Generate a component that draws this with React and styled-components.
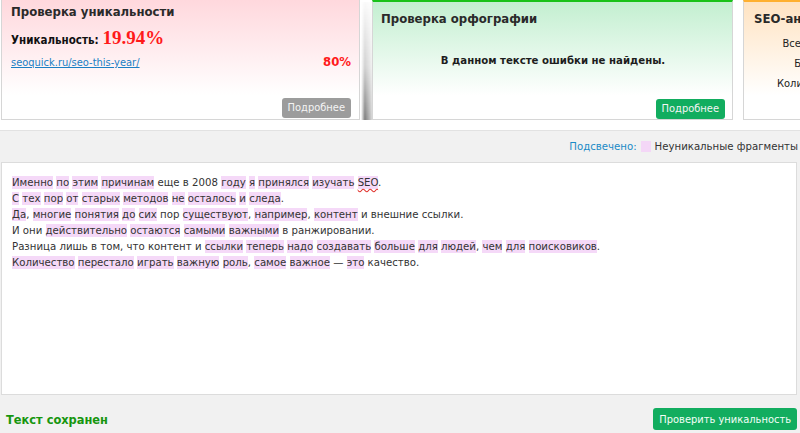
import React from 'react';
import styled, { createGlobalStyle } from 'styled-components';

const GlobalStyle = createGlobalStyle`
  html, body {
    margin: 0;
    padding: 0;
    background: #fff;
    overflow: hidden;
  }
  body {
    font-family: "DejaVu Sans Condensed", "DejaVu Sans", Verdana, sans-serif;
    font-stretch: condensed;
    color: #222;
  }
`;

const Page = styled.div`
  width: 800px;
  height: 433px;
  display: flex;
  flex-direction: column;
  overflow: hidden;
`;

const CardsRow = styled.div`
  display: flex;
  height: 120px;
  padding-left: 1px;
  margin-bottom: 10px;
`;

const Card = styled.div`
  position: relative;
  flex: 0 0 auto;
  width: ${(p) => p.width}px;
  margin-left: ${(p) => p.gap || 0}px;
  box-sizing: border-box;
  display: flex;
  flex-direction: column;
  border: 1px solid #d6d6d6;
  border-top: ${(p) => (p.accent ? `2px solid ${p.accent}` : 'none')};
  background: linear-gradient(${(p) => p.tint} 0%, #fff 80%);
  padding: ${(p) => p.pad};
`;

const CardShadow = styled.div`
  position: absolute;
  left: -12px;
  top: 0;
  bottom: -1px;
  width: 11px;
  background: linear-gradient(to top, rgba(0, 0, 0, 0.5), rgba(0, 0, 0, 0.18) 45%, rgba(0, 0, 0, 0.02));
  -webkit-mask-image: linear-gradient(to right, transparent, #000 35%, rgba(0,0,0,0.6) 75%, rgba(0,0,0,0.3));
  mask-image: linear-gradient(to right, transparent, #000 35%, rgba(0,0,0,0.6) 75%, rgba(0,0,0,0.3));
`;

const CardTitle = styled.div`
  font-size: 13px;
  font-weight: bold;
  color: #2a2a2a;
  white-space: nowrap;
`;

const ScoreLine = styled.div`
  margin-top: 8px;
  font-size: 11.5px;
  font-weight: bold;
  color: #111;
  display: flex;
  align-items: baseline;
  gap: 4px;
`;

const ScoreValue = styled.span`
  font-family: "Liberation Serif", "Times New Roman", serif;
  font-size: 19px;
  color: #ff1a1a;
`;

const SourceRow = styled.div`
  margin-top: 5px;
  display: flex;
  justify-content: space-between;
  align-items: baseline;
  font-size: 11px;
`;

const SourceLink = styled.a`
  color: #1b7fc4;
  text-decoration: underline;
`;

const Percent = styled.span`
  font-size: 13px;
  font-weight: bold;
  color: #ff1a1a;
`;

const CardMessage = styled.div`
  margin-top: 28px;
  text-align: center;
  font-size: 11.3px;
  font-weight: bold;
  color: #1d1d1d;
`;

const CardFooter = styled.div`
  margin-top: auto;
  display: flex;
  justify-content: flex-end;
`;

const SmallButton = styled.button`
  font-family: inherit;
  font-stretch: condensed;
  font-size: 11px;
  color: #f4f4f4;
  background: ${(p) => p.color};
  border: none;
  border-radius: 3px;
  height: 20px;
  padding: 0 6px;
  line-height: 20px;
`;

const StatsTable = styled.div`
  margin-top: 9px;
  display: grid;
  grid-template-columns: 114px auto;
  column-gap: 6px;
  row-gap: 3px;
  font-size: 11px;
  color: #222;
`;

const StatLabel = styled.div`
  text-align: right;
  white-space: nowrap;
  line-height: 17px;
`;

const Panel = styled.div`
  flex: 1;
  background: #f1f1f1;
  border-top: 1px solid #e2e2e2;
  display: flex;
  flex-direction: column;
`;

const Toolbar = styled.div`
  height: 31px;
  display: flex;
  align-items: center;
  justify-content: flex-end;
  gap: 4px;
  padding-right: 2px;
  font-size: 11.3px;
  white-space: nowrap;
`;

const LegendLabel = styled.span`
  color: #1a8ac6;
`;

const Swatch = styled.span`
  display: inline-block;
  width: 10px;
  height: 11px;
  background: #f4d7f7;
`;

const LegendText = styled.span`
  color: #333;
`;

const Editor = styled.div`
  height: 233px;
  margin: 0 3px 0 1px;
  box-sizing: border-box;
  background: #fff;
  border: 1px solid #dcdcdc;
  padding: 12px 10px;
  font-size: 11.3px;
  line-height: 16px;
  color: #333;
`;

const Line = styled.div`
  white-space: nowrap;
`;

const Mark = styled.span`
  background: #f5d9f8;
  text-decoration: ${(p) => (p.typo ? 'underline wavy #e0302a' : 'none')};
  text-underline-offset: 2px;
`;

const Footer = styled.div`
  flex: 1;
  display: flex;
  align-items: center;
  justify-content: space-between;
  padding: 10px 3px 0 6px;
`;

const Saved = styled.span`
  font-size: 12.7px;
  font-weight: bold;
  color: #17960f;
`;

const CheckButton = styled.button`
  font-family: inherit;
  font-stretch: condensed;
  font-size: 11px;
  color: #f4fff8;
  background: #12ad5f;
  border: none;
  border-radius: 3px;
  height: 22px;
  padding: 0 6px;
`;

// [text, highlighted?, trailing punctuation] — spaces between are plain
const lines = [
  [['Именно', 1], ['по', 1], ['этим', 1], ['причинам', 1], ['еще', 0], ['в', 0], ['2008', 0], ['году', 1], ['я', 1], ['принялся', 1], ['изучать', 1], ['SEO', 2, '.']],
  [['С', 1], ['тех', 1], ['пор', 1], ['от', 1], ['старых', 1], ['методов', 1], ['не', 1], ['осталось', 1], ['и', 1], ['следа', 1, '.']],
  [['Да', 1, ','], ['многие', 1], ['понятия', 1], ['до', 1], ['сих', 1], ['пор', 0], ['существуют', 1, ','], ['например', 1, ','], ['контент', 1], ['и', 0], ['внешние', 0], ['ссылки.', 0]],
  [['И', 0], ['они', 0], ['действительно', 1], ['остаются', 1], ['самыми', 1], ['важными', 1], ['в', 0], ['ранжировании.', 0]],
  [['Разница', 0], ['лишь', 0], ['в', 0], ['том,', 0], ['что', 0], ['контент', 0], ['и', 0], ['ссылки', 1], ['теперь', 1], ['надо', 1], ['создавать', 1], ['больше', 1], ['для', 1], ['людей', 1, ','], ['чем', 1], ['для', 1], ['поисковиков', 1, '.']],
  [['Количество', 1], ['перестало', 1], ['играть', 1], ['важную', 1], ['роль', 1, ','], ['самое', 1], ['важное', 1], ['—', 0], ['это', 1], ['качество.', 0]],
];

const TextLine = ({ words }) => (
  <Line>
    {words.map(([w, hl, tail], i) => (
      <React.Fragment key={i}>
        {i > 0 && ' '}
        {hl ? <Mark typo={hl === 2}>{w}</Mark> : w}
        {tail}
      </React.Fragment>
    ))}
  </Line>
);

export default function App() {
  return (
    <Page>
      <GlobalStyle />
      <CardsRow>
        <Card width={359} tint="#ffd8dd" pad="4px 8px 1px 9px">
          <CardTitle>Проверка уникальности</CardTitle>
          <ScoreLine>
            Уникальность: <ScoreValue>19.94%</ScoreValue>
          </ScoreLine>
          <SourceRow>
            <SourceLink href="#">seoquick.ru/seo-this-year/</SourceLink>
            <Percent>80%</Percent>
          </SourceRow>
          <CardFooter>
            <SmallButton color="#9c9c9c">Подробнее</SmallButton>
          </CardFooter>
        </Card>
        <Card width={361} gap={12} accent="#19c219" tint="#c3efd0" pad="9px 7px 0 8px">
          <CardShadow />
          <CardTitle>Проверка орфографии</CardTitle>
          <CardMessage>В данном тексте ошибки не найдены.</CardMessage>
          <CardFooter>
            <SmallButton color="#12ad5f">Подробнее</SmallButton>
          </CardFooter>
        </Card>
        <Card width={240} gap={10} accent="#ffb030" tint="#ffe3c2" pad="9px 8px 0 10px">
          <CardTitle>SEO-анализ текста</CardTitle>
          <StatsTable>
            <StatLabel>Всего символов:</StatLabel>
            <span>416</span>
            <StatLabel>Без пробелов:</StatLabel>
            <span>354</span>
            <StatLabel>Количество слов:</StatLabel>
            <span>63</span>
          </StatsTable>
        </Card>
      </CardsRow>
      <Panel>
        <Toolbar>
          <LegendLabel>Подсвечено:</LegendLabel>
          <Swatch />
          <LegendText>Неуникальные фрагменты</LegendText>
        </Toolbar>
        <Editor>
          {lines.map((words, i) => (
            <TextLine key={i} words={words} />
          ))}
        </Editor>
        <Footer>
          <Saved>Текст сохранен</Saved>
          <CheckButton>Проверить уникальность</CheckButton>
        </Footer>
      </Panel>
    </Page>
  );
}
